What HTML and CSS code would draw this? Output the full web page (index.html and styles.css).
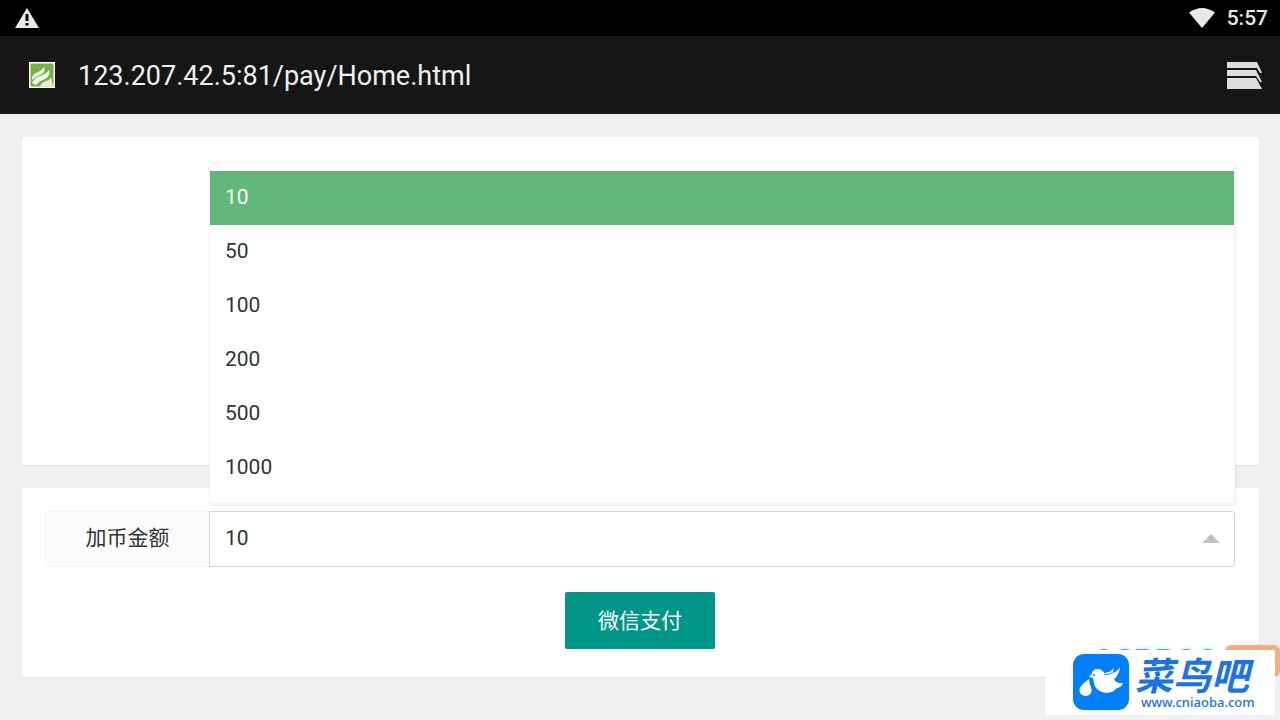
FILE: index.html
```html
<!DOCTYPE html>
<html lang="zh-CN">
<head>
  <meta charset="UTF-8">
  <meta name="viewport" content="width=device-width, initial-scale=1">
  <title>微信支付</title>
  <link rel="stylesheet" href="styles.css">
</head>
<body>
  <div class="status-bar">
    <svg class="icon-warning" width="24" height="20" viewBox="0 0 24 20">
      <path fill="#e8e8e8" d="M12 0l12 20H0z"/>
      <path fill="#000" d="M10.500 6h3v7h-3zM10.500 15h3v2.500h-3z"/>
    </svg>
    <div class="status-right">
      <svg width="26" height="20" viewBox="0 0 26 20">
        <path fill="#e8e8e8" d="M0 4.500Q13-4.500 26 4.500L13 20z"/>
      </svg>
      <span class="clock">5:57</span>
    </div>
  </div>

  <header class="address-bar">
    <svg class="favicon" width="26" height="26" viewBox="0 0 26 26">
      <path fill="#fff" d="M0 0h26v26H0z"/>
      <path fill="#76b043" d="M1.500 1.500h23v23h-23z"/>
      <path fill="#e6f2da" d="M3 15q2-4 6-5 4-2 6-5 2 4-2 7-5 2-10 6z"/>
      <path fill="#f4faec" d="M3 21q2-5 8-7 6-2 9-6 2 5-4 9-6 2-9 6z"/>
      <path fill="#e6f2da" d="M11 24.500q1-4 6-5.500 4-1 5-4l2 9.500z"/>
    </svg>
    <span class="url">123.207.42.5:81/pay/Home.html</span>
    <svg class="icon-tabs" width="35" height="27" viewBox="0 0 35 27">
      <path fill="#dcdcdc" d="M0 0h30l5 11h-2l-3-5H0zM0 8h29l6 12h-2l-4-6H0zM0 16h29l6 11H0z"/>
    </svg>
  </header>

  <main class="content">
    <section class="card card-main"></section>

    <section class="card">
      <form>
        <div class="form-item">
          <label class="form-label" for="amount">加币金额</label>
          <div class="form-select">
            <select id="amount">
              <option selected>10</option>
              <option>50</option>
              <option>100</option>
              <option>200</option>
              <option>500</option>
              <option>1000</option>
            </select>
            <ul class="options" role="listbox">
              <li class="selected" role="option" aria-selected="true">10</li>
              <li role="option">50</li>
              <li role="option">100</li>
              <li role="option">200</li>
              <li role="option">500</li>
              <li role="option">1000</li>
            </ul>
          </div>
        </div>
        <button class="pay-button" type="button">微信支付</button>
      </form>
    </section>
  </main>

  <div class="watermark">
    <div class="watermark-under">
      <span class="under-text">ASPROS</span>
      <span class="under-tag"></span>
    </div>
    <a class="site-logo" href="#">
      <svg width="56" height="56" viewBox="0 0 56 56">
        <rect width="56" height="56" rx="11" fill="#0080ff"/>
        <path fill="#fff" d="M16 23l2.500-3c.5-3 3-5 6-5 4 0 5 2 7 4 4-1 7-1 9-5 .5 2-.5 4-2 5.500 4-1 6-3 8.500-6-.5 5-3 9-6 12 2 3 5 4 9 3.500-1 3-3 4.500-6 5-6 7-16 6-21 0-2-2.500-2-6-3-10z"/>
        <path fill="#fff" d="M16.500 25c-3 2-10 6-10 11.500 0 3 3 5.500 6 5.500 4 0 6.500-3 6-6.500-.5-4-3-6-2-10.500z"/>
        <path fill="none" stroke="#0080ff" stroke-width="1" d="M31 20c3 1 6 0 8-1"/>
        <circle cx="21" cy="21" r="1" fill="#0080ff"/>
      </svg>
      <span class="logo-text">
        <span class="logo-name">菜鸟吧</span>
        <span class="logo-url">www.cniaoba.com</span>
      </span>
    </a>
  </div>
</body>
</html>
```

FILE: styles.css
```css
* {
  box-sizing: border-box;
}
body {
  margin: 0;
  min-height: 100vh;
  background-color: #f0f0f0;
  color: #333;
  font-family: Roboto, "Noto Sans CJK SC", sans-serif;
  font-size: 21px;
  overflow: hidden;
}
.status-bar {
  display: flex;
  align-items: center;
  justify-content: space-between;
  height: 36px;
  padding: 0 12px 0 15px;
  background-color: #000;
  color: #e8e8e8;
}
.status-right {
  display: flex;
  align-items: center;
  gap: 12px;
}
.clock {
  font-size: 21px;
  font-weight: 500;
  line-height: 36px;
}
.address-bar {
  display: flex;
  align-items: center;
  height: 78px;
  padding: 0 18px 0 29px;
  background-color: #161616;
  color: #f0f0f0;
}
.url {
  flex: 1;
  margin-left: 23px;
  padding-top: 2px;
  font-size: 27px;
}
.content {
  padding: 23px 21px 23px 22px;
}
.card {
  margin-bottom: 23px;
  padding: 23px 24px 23px 23px;
  background-color: #fff;
  border-radius: 3px;
  box-shadow: 0 1px 2px rgba(0,0,0,0.06);
}
.card-main {
  min-height: 328px;
}
.form-item {
  display: flex;
  height: 56px;
  margin-bottom: 25px;
}
.form-label {
  width: 164px;
  border: 1px solid #f3f3f3;
  border-right: none;
  border-radius: 3px 0 0 3px;
  background-color: #fbfbfb;
  line-height: 52px;
  text-align: center;
}
.form-select {
  position: relative;
  flex: 1;
}
.form-select select {
  width: 100%;
  height: 100%;
  padding: 0 15px 2px;
  border: 1px solid #d2d2d2;
  border-radius: 0 3px 3px 0;
  background-color: #fff;
  color: #333;
  font: inherit;
  appearance: none;
}
/* arrow */
.form-select:after {
  position: absolute;
  content: "";
  top: 23px;
  right: 15px;
  border: 9px solid transparent;
  border-top: none;
  border-bottom-color: #c2c2c2;
}
.options {
  position: absolute;
  left: 0;
  right: 0;
  bottom: 63px;
  z-index: 1;
  margin: 0;
  padding: 8px 0;
  border: 1px solid #f5f5f5;
  background-color: #fff;
  box-shadow: 1px 2px 3px rgba(0,0,0,0.06);
  list-style: none;
}
.options li {
  height: 54px;
  padding: 0 15px;
  line-height: 52px;
}
.options .selected {
  background-color: #62b77a;
  color: #fff;
}
.pay-button {
  display: block;
  width: 150px;
  height: 57px;
  margin: 0 auto 5px;
  padding: 0 0 3px;
  border: none;
  border-radius: 2px;
  background-color: #009688;
  color: #fff;
  font: inherit;
  cursor: pointer;
}
.watermark {
  position: absolute;
  right: 0;
  bottom: 5px;
  width: 235px;
  height: 70px;
}
.watermark-under {
  position: absolute;
  top: 0;
  right: 0;
  display: flex;
  align-items: flex-start;
  gap: 8px;
}
.under-text {
  color: #7197a4;
  font-size: 32px;
  font-weight: 700;
  line-height: 30px;
  text-shadow: 0 0 4px #9fe4f5;
}
.under-tag {
  width: 55px;
  height: 32px;
  border-radius: 6px;
  background-color: #f4ae78;
}
.site-logo {
  position: absolute;
  left: 0;
  bottom: 0;
  display: flex;
  align-items: flex-start;
  gap: 6px;
  width: 230px;
  height: 65px;
  padding: 4px 0 0 28px;
  background-color: #fff;
  color: #1a73e8;
  text-decoration: none;
}
.logo-text {
  display: flex;
  flex-direction: column;
}
.logo-name {
  font-family: "Noto Sans CJK SC", sans-serif;
  font-size: 38px;
  font-weight: 700;
  font-style: italic;
  line-height: 40px;
}
.logo-url {
  padding-left: 6px;
  font-family: "Noto Sans", sans-serif;
  font-size: 13px;
  font-weight: 500;
  line-height: 16px;
}
```
